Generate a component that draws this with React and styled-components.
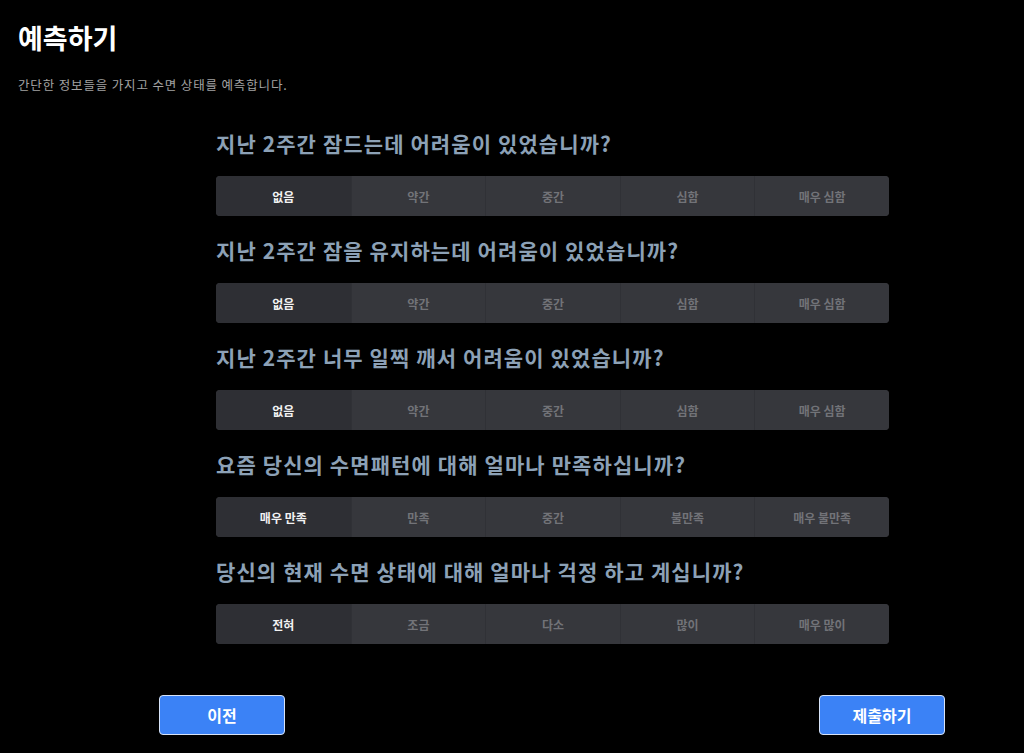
import React, { useState } from 'react';
import styled, { createGlobalStyle } from 'styled-components';

const GlobalStyle = createGlobalStyle`
  html, body {
    margin: 0;
    padding: 0;
    background: #000;
  }
  body {
    font-family: 'Noto Sans CJK KR', 'Noto Sans', sans-serif;
    color: #fff;
  }
`;

const Page = styled.div`
  min-height: 753px;
  background: #000;
  padding: 18px 18px 0 18px;
  box-sizing: border-box;
`;

const Title = styled.h1`
  margin: 0;
  font-size: 27px;
  line-height: 40px;
  font-weight: 700;
  color: #fff;
`;

const Subtitle = styled.p`
  margin: 18px 0 0 0;
  font-size: 12.5px;
  line-height: 18px;
  letter-spacing: 0.85px;
  color: #a3a3a3;
`;

const Form = styled.div`
  display: flex;
  flex-direction: column;
  width: 673px;
  margin: 34px 0 0 198px;
`;

const Question = styled.section`
  display: flex;
  flex-direction: column;
  gap: 18px;
  margin-bottom: 19px;
`;

const QuestionText = styled.h2`
  margin: 0;
  font-size: 21px;
  line-height: 30px;
  letter-spacing: 1.1px;
  font-weight: 700;
  color: #8ca1b6;
`;

const Segments = styled.div`
  display: grid;
  grid-template-columns: repeat(5, 1fr);
  height: 40px;
  border-radius: 4px;
  overflow: hidden;
  background: #36373c;
`;

const Segment = styled.button`
  border: none;
  border-left: ${p => (p.$first ? 'none' : '1px solid #303136')};
  background: ${p => (p.$active ? '#2e2f34' : '#36373c')};
  color: ${p => (p.$active ? '#f2f2f2' : '#727378')};
  font-family: inherit;
  font-size: 12px;
  font-weight: 700;
  cursor: pointer;
  padding: 0;
`;

const Actions = styled.div`
  display: flex;
  justify-content: space-between;
  width: 786px;
  margin: 32px 0 0 141px;
`;

const Button = styled.button`
  width: 126px;
  height: 40px;
  border: 1px solid #d7e3f7;
  border-radius: 4px;
  background: #3b82f6;
  color: #fff;
  font-family: inherit;
  font-size: 16px;
  font-weight: 700;
  cursor: pointer;
`;

const QUESTIONS = [
  {
    text: '지난 2주간 잠드는데 어려움이 있었습니까?',
    options: ['없음', '약간', '중간', '심함', '매우 심함'],
  },
  {
    text: '지난 2주간 잠을 유지하는데 어려움이 있었습니까?',
    options: ['없음', '약간', '중간', '심함', '매우 심함'],
  },
  {
    text: '지난 2주간 너무 일찍 깨서 어려움이 있었습니까?',
    options: ['없음', '약간', '중간', '심함', '매우 심함'],
  },
  {
    text: '요즘 당신의 수면패턴에 대해 얼마나 만족하십니까?',
    options: ['매우 만족', '만족', '중간', '불만족', '매우 불만족'],
  },
  {
    text: '당신의 현재 수면 상태에 대해 얼마나 걱정 하고 계십니까?',
    options: ['전혀', '조금', '다소', '많이', '매우 많이'],
  },
];

export default function App() {
  const [answers, setAnswers] = useState(QUESTIONS.map(() => 0));

  const choose = (qi, oi) => {
    setAnswers(prev => prev.map((a, i) => (i === qi ? oi : a)));
  };

  return (
    <Page>
      <GlobalStyle />
      <Title>예측하기</Title>
      <Subtitle>간단한 정보들을 가지고 수면 상태를 예측합니다.</Subtitle>

      <Form>
        {QUESTIONS.map((q, qi) => (
          <Question key={qi}>
            <QuestionText>{q.text}</QuestionText>
            <Segments>
              {q.options.map((opt, oi) => (
                <Segment
                  key={opt}
                  $first={oi === 0}
                  $active={answers[qi] === oi}
                  onClick={() => choose(qi, oi)}
                >
                  {opt}
                </Segment>
              ))}
            </Segments>
          </Question>
        ))}
      </Form>

      <Actions>
        <Button>이전</Button>
        <Button>제출하기</Button>
      </Actions>
    </Page>
  );
}
